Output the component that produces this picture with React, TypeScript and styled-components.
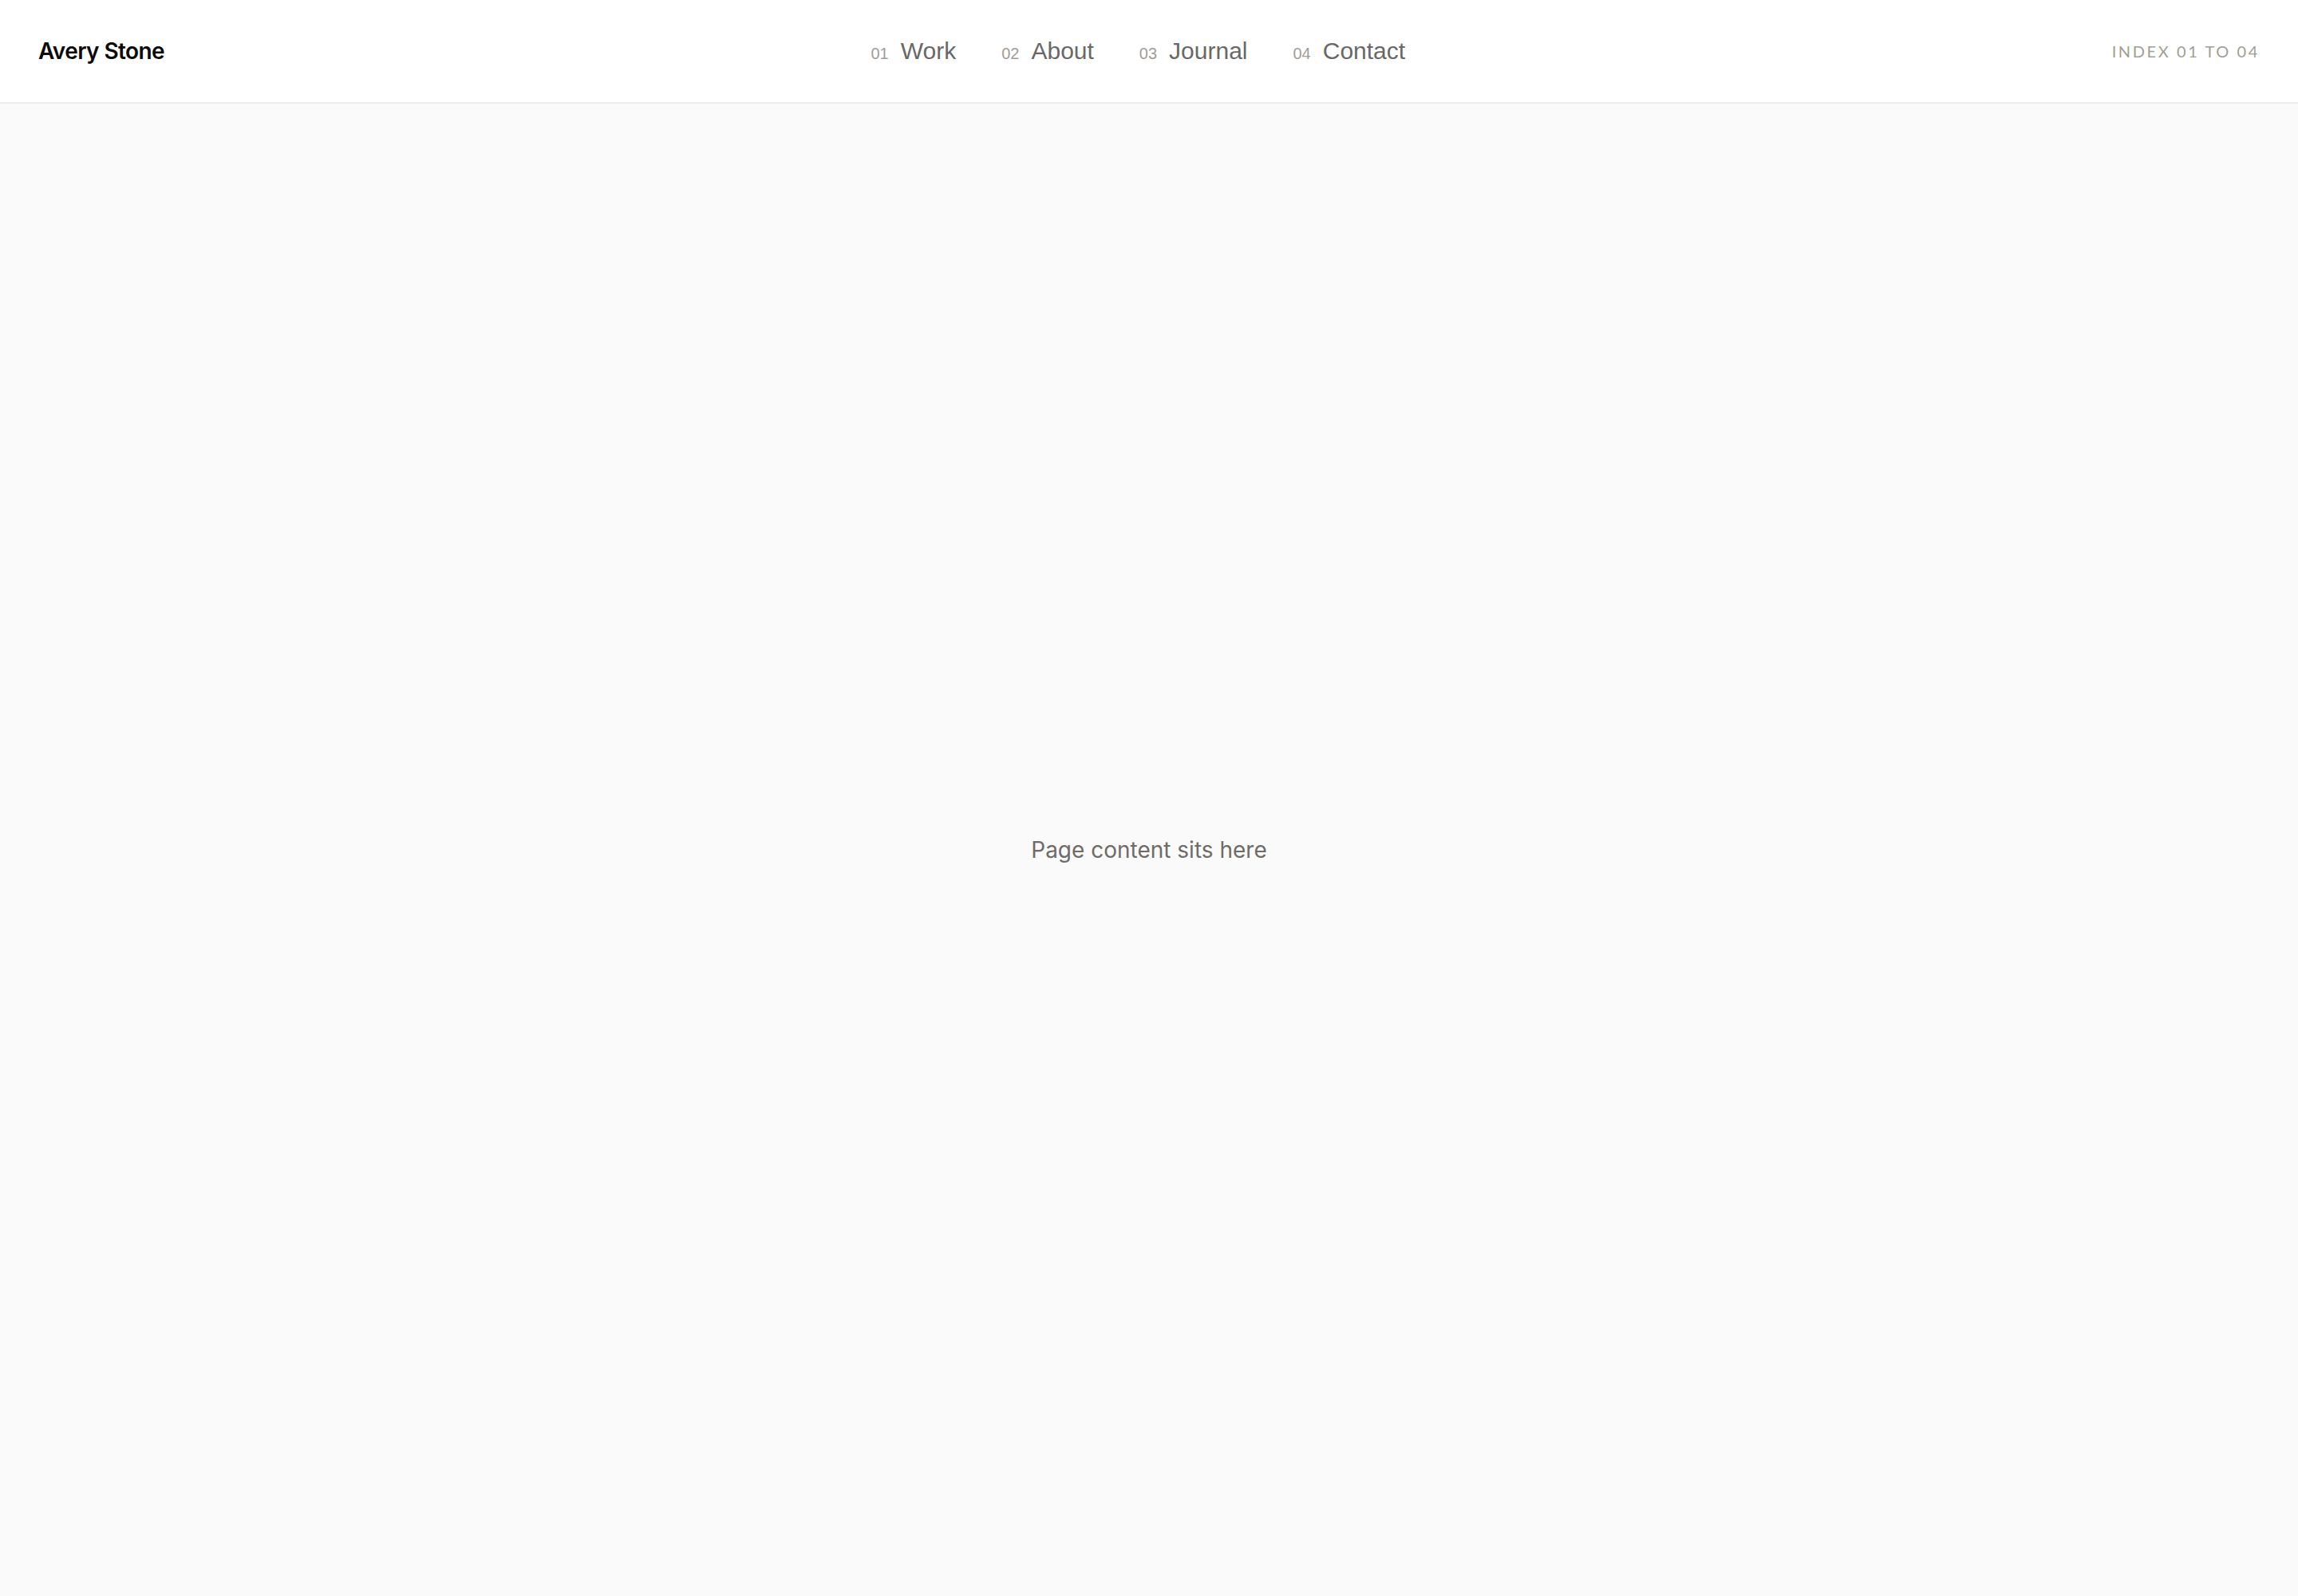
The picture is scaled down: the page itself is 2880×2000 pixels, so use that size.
import React from 'react'
import styled, { createGlobalStyle } from 'styled-components'

const GlobalStyle = createGlobalStyle`
  html, body {
    margin: 0;
    padding: 0;
    background: #fafafa;
  }
  body {
    font-family: Inter, "Noto Sans", sans-serif;
    -webkit-font-smoothing: antialiased;
  }
  #root {
    min-height: 100vh;
    display: flex;
    flex-direction: column;
  }
`

const Header = styled.header`
  height: 130px;
  box-sizing: border-box;
  display: flex;
  align-items: center;
  justify-content: space-between;
  padding: 0 48px;
  background: #fff;
  border-bottom: 2px solid #ececec;
`

const Logo = styled.a`
  font-family: Inter, sans-serif;
  font-size: 28px;
  font-weight: 600;
  letter-spacing: -0.6px;
  color: #0a0a0a;
  text-decoration: none;
`

const Nav = styled.nav`
  display: flex;
  align-items: baseline;
  gap: 57px;
`

const NavItem = styled.a`
  display: flex;
  align-items: baseline;
  gap: 15px;
  font-family: "Liberation Sans", Arial, sans-serif;
  font-size: 30px;
  color: #696867;
  text-decoration: none;
`

const NavNum = styled.span`
  font-size: 20px;
  color: #a29d96;
`

const IndexLabel = styled.span`
  font-family: Lato, sans-serif;
  font-size: 20px;
  letter-spacing: 2.6px;
  text-transform: uppercase;
  color: #a29d95;
`

const Main = styled.main`
  flex: 1;
  display: flex;
  align-items: center;
  justify-content: center;
`

const Placeholder = styled.p`
  margin: 0;
  font-size: 28px;
  color: #6f6b68;
`

const links = [
  { num: '01', label: 'Work' },
  { num: '02', label: 'About' },
  { num: '03', label: 'Journal' },
  { num: '04', label: 'Contact' },
]

export default function App() {
  return (
    <>
      <GlobalStyle />
      <Header>
        <Logo href="#">Avery Stone</Logo>
        <Nav>
          {links.map(l => (
            <NavItem key={l.num} href="#">
              <NavNum>{l.num}</NavNum>
              {l.label}
            </NavItem>
          ))}
        </Nav>
        <IndexLabel>Index 01 to 04</IndexLabel>
      </Header>
      <Main>
        <Placeholder>Page content sits here</Placeholder>
      </Main>
    </>
  )
}
